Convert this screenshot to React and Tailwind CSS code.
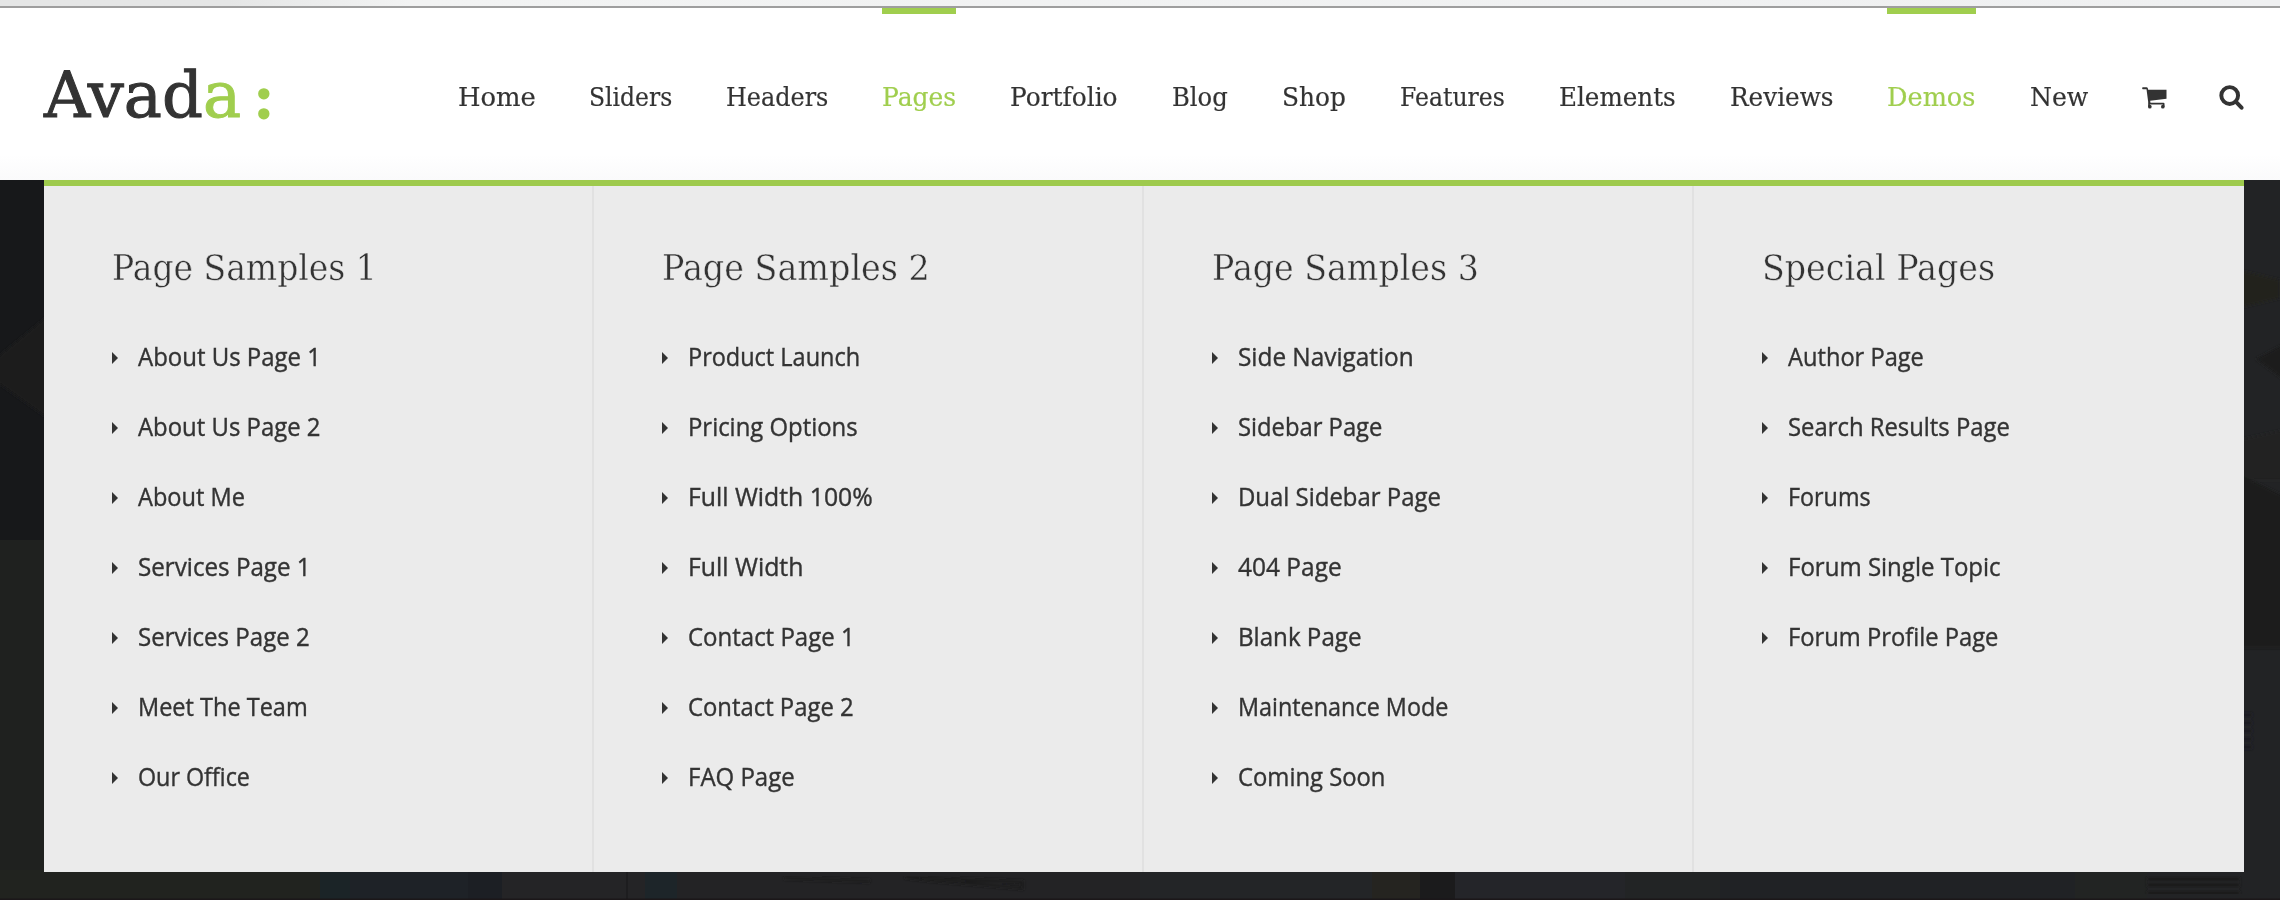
import React, { useLayoutEffect, useRef, useState } from 'react';

const NAV = [
  { label: 'Home', width: 77.5 },
  { label: 'Sliders', width: 83 },
  { label: 'Headers', width: 102 },
  { label: 'Pages', width: 74, active: true },
  { label: 'Portfolio', width: 108 },
  { label: 'Blog', width: 56 },
  { label: 'Shop', width: 64 },
  { label: 'Features', width: 105 },
  { label: 'Elements', width: 116.5 },
  { label: 'Reviews', width: 103.5 },
  { label: 'Demos', width: 88.5, active: true },
  { label: 'New', width: 58 },
];

const COLUMNS = [
  {
    title: 'Page Samples 1',
    width: 265,
    links: [
      ['About Us Page 1', 182.5],
      ['About Us Page 2', 182],
      ['About Me', 107],
      ['Services Page 1', 173],
      ['Services Page 2', 172],
      ['Meet The Team', 170],
      ['Our Office', 112],
    ],
  },
  {
    title: 'Page Samples 2',
    width: 268,
    links: [
      ['Product Launch', 172.5],
      ['Pricing Options', 170],
      ['Full Width 100%', 185],
      ['Full Width', 115.5],
      ['Contact Page 1', 167],
      ['Contact Page 2', 166],
      ['FAQ Page', 107],
    ],
  },
  {
    title: 'Page Samples 3',
    width: 267,
    links: [
      ['Side Navigation', 176],
      ['Sidebar Page', 144.5],
      ['Dual Sidebar Page', 202.5],
      ['404 Page', 103.5],
      ['Blank Page', 123.5],
      ['Maintenance Mode', 210.5],
      ['Coming Soon', 147.5],
    ],
  },
  {
    title: 'Special Pages',
    width: 233,
    links: [
      ['Author Page', 135.5],
      ['Search Results Page', 222],
      ['Forums', 82.5],
      ['Forum Single Topic', 212.5],
      ['Forum Profile Page', 210],
    ],
  },
];

// Narrows or widens a label so that it fills the given width.
function Fit({ text, width }) {
  const ref = useRef(null);
  const [scale, setScale] = useState(1);
  useLayoutEffect(() => {
    setScale(width / ref.current.offsetWidth);
  }, [text, width]);
  return (
    <span className="inline-block whitespace-nowrap" style={{ width: `${width}px` }}>
      <span ref={ref} className="inline-block origin-left" style={{ transform: `scaleX(${scale})` }}>
        {text}
      </span>
    </span>
  );
}

function CartIcon() {
  return (
    <svg viewBox="0 0 74 66" className="h-[22px] w-[25px]" fill="currentColor">
      <path d="M2 1H13Q16 1 17 4L18 8H73V35L24 41.500L25 47H64Q67 47 67 50V59H62V52.500H23V59H18V44L13 7H2Q0 7 0 4Q0 1 2 1Z" />
      <circle cx="23" cy="59" r="5.500" />
      <circle cx="62" cy="59" r="5.500" />
    </svg>
  );
}

function SearchIcon() {
  return (
    <svg viewBox="0 0 75 76" className="h-[25px] w-[25px]" fill="none" stroke="currentColor" strokeWidth="12">
      <circle cx="32" cy="32" r="25.500" />
      <path d="M52 52L68 69" strokeLinecap="round" />
    </svg>
  );
}

function Backdrop() {
  return (
    <svg viewBox="0 0 2280 720" className="absolute inset-0 h-full w-full">
      <defs>
        <filter id="soft" x="-5%" y="-5%" width="110%" height="110%">
          <feGaussianBlur stdDeviation="1.500" />
        </filter>
      </defs>
      <rect width="2280" height="720" fill="#222325" />
      <rect width="60" height="360" fill="#17181a" />
      <rect y="360" width="60" height="360" fill="#1f211f" />
      <g filter="url(#soft)">
        <path d="M-6 180L50 134V240L-6 200Z" fill="#1c1d1f" />
        <path d="M2230 88L2280 100V118L2230 130Z" fill="#20221f" />
        <path d="M2256 179L2284 164V200Z" fill="#1c1d1e" />
        <path d="M2230 262L2284 250V300L2230 300Z" fill="#202220" />
        <path d="M2230 290L2284 316V360H2230Z" fill="#1d1f1d" />
        <rect x="2230" y="358" width="60" height="110" fill="#1a1b1c" />
        <path d="M2240 535H2252M2240 543H2252M2240 551H2252M2240 559H2252M2240 567H2252" stroke="#1a1b20" strokeWidth="4" />
      </g>
      <g>
        <rect y="690" width="320" height="30" fill="#21231f" />
        <rect x="320" y="690" width="30" height="30" fill="#1b2427" />
        <rect x="350" y="690" width="118" height="30" fill="#1e2227" />
        <rect x="468" y="690" width="34" height="30" fill="#1c1f24" />
        <rect x="502" y="690" width="143" height="30" fill="#242426" />
        <rect x="626" y="690" width="2" height="30" fill="#1d1d1f" />
        <rect x="645" y="690" width="32" height="30" fill="#1d2529" />
        <rect x="677" y="690" width="463" height="30" fill="#232325" />
        <rect x="1140" y="690" width="232" height="30" fill="#232527" />
        <rect x="1372" y="690" width="48" height="30" fill="#252420" />
        <rect x="1420" y="690" width="35" height="30" fill="#1b1b1c" />
        <rect x="1455" y="690" width="170" height="30" fill="#242529" />
        <rect x="1625" y="690" width="95" height="30" fill="#222425" />
        <rect x="1720" y="690" width="355" height="30" fill="#202225" />
        <rect x="2075" y="690" width="72" height="30" fill="#222423" />
      </g>
      <g filter="url(#soft)">
        <path d="M784 698L870 701M905 697L1022 702V708L930 700Z" stroke="#1c1c1d" strokeWidth="3" fill="none" />
        <path d="M2147 699H2240M2147 705H2240M2147 713H2240" stroke="#1b1c1d" strokeWidth="4" />
      </g>
      <rect y="718.500" width="2280" height="1.500" fill="#1b1719" />
    </svg>
  );
}

function MegaColumn({ column, last }) {
  return (
    <section className={`h-full w-[550px] pl-[68px] pt-[60px] ${last ? '' : 'border-r-2 border-[#e1e1e1]'}`}>
      <h2 className="h-[45px] font-['DejaVu_Serif',serif] text-[35px] leading-[45px] [-webkit-text-stroke:0.4px_#ebebeb]">
        <Fit text={column.title} width={column.width} />
      </h2>
      <ul className="mt-[30px] font-['Open_Sans',sans-serif] text-[26px] [-webkit-text-stroke:0.4px_#333333]">
        {column.links.map(([label, width]) => (
          <li key={label} className="flex h-[70px] items-center">
            <svg viewBox="0 0 6 12" className="mt-[3px] mr-[19.5px] h-3 w-1.5" fill="currentColor">
              <path d="M0 0L6 6L0 12Z" />
            </svg>
            <a className="leading-[36px]">
              <Fit text={label} width={width} />
            </a>
          </li>
        ))}
      </ul>
    </section>
  );
}

export default function App() {
  return (
    <div className="flex h-[900px] w-[2280px] flex-col overflow-hidden bg-white text-[#333333]">
      <div className="h-2 shrink-0 border-b-2 border-[#9e9e9e] bg-linear-to-r from-[#e5e6e6] from-10% via-[#f2f3f3] via-18% to-[#eff0f1]" />
      <header className="flex h-[172px] shrink-0 bg-linear-to-b from-white from-85% to-[#fafafb] pl-11">
        <div className="flex w-[413.5px] items-center pt-px font-['DejaVu_Serif',serif] text-[64px] leading-none [-webkit-text-stroke:1px_#333333]">
          <span>Avad</span>
          <span className="text-[#a0ce4e] [-webkit-text-stroke:1px_#a0ce4e]">a</span>
          <span className="ml-3 text-[#a0ce4e] [-webkit-text-stroke:3px_#a0ce4e]">:</span>
        </div>
        <nav className="flex gap-[54px] font-['DejaVu_Serif',serif] text-[26px] [-webkit-text-stroke:0.2px_currentColor]">
          {NAV.map(({ label, width, active }) => (
            <a
              key={label}
              className={`flex h-full flex-col ${active ? 'text-[#a0ce4e]' : ''}`}
            >
              <span className={`h-1.5 w-full ${active ? 'bg-[#a0ce4e]' : ''}`} />
              <span className="pt-[68px] leading-[30px]">
                <Fit text={label} width={width} />
              </span>
            </a>
          ))}
          <span className="flex pt-[79px]">
            <CartIcon />
          </span>
          <span className="-ml-[1.5px] flex pt-[77px]">
            <SearchIcon />
          </span>
        </nav>
      </header>
      <main className="relative h-[720px] bg-[#222325] px-11 pr-9">
        <Backdrop />
        <div className="relative flex h-[692px] w-[2200px] border-t-[6px] border-[#9eca4d] bg-[#ebebeb]">
          {COLUMNS.map((column, i) => (
            <MegaColumn key={column.title} column={column} last={i === COLUMNS.length - 1} />
          ))}
        </div>
      </main>
    </div>
  );
}
